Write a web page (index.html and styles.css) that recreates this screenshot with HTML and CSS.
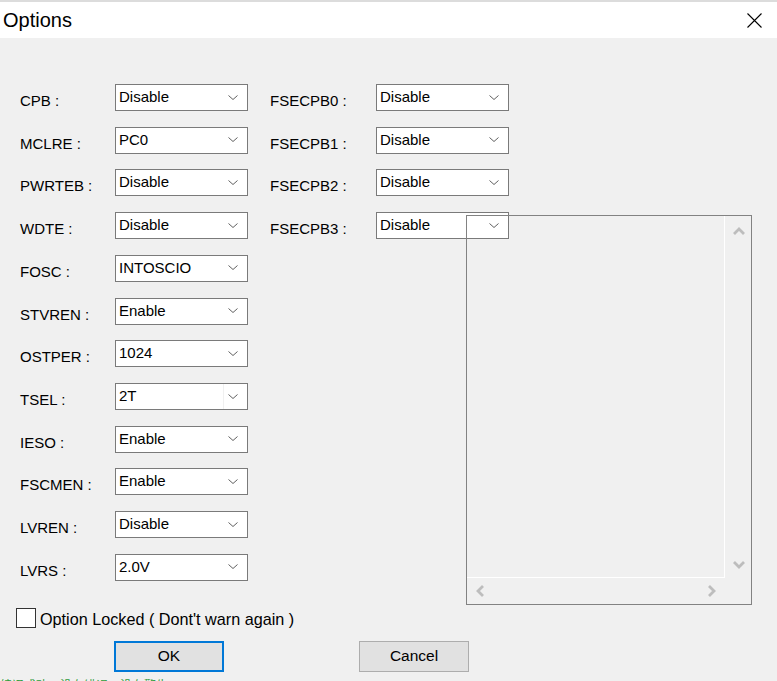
FILE: index.html
```html
<!DOCTYPE html>
<html>
<head>
<meta charset="utf-8">
<title>Options</title>
<link rel="stylesheet" href="styles.css">
</head>
<body>
<div class="window">
  <div class="titlebar">
    <span class="title">Options</span>
    <svg class="close" width="15" height="15" viewBox="0 0 15 15"><path d="M0.5 0.5 L14.5 14.5 M14.5 0.5 L0.5 14.5" stroke="#000" stroke-width="1.1" fill="none"/></svg>
  </div>
  <div class="content">
    <div class="fields">
      <div class="col col-left">
        <div class="row"><span class="label">CPB :</span><div class="combo"><span class="val">Disable</span><span class="arrow"><svg width="10" height="5" viewBox="0 0 10 5"><polyline points="0.5,0.5 5,4.5 9.5,0.5" fill="none" stroke="#606060" stroke-width="1"/></svg></span></div></div>
        <div class="row"><span class="label">MCLRE :</span><div class="combo"><span class="val">PC0</span><span class="arrow"><svg width="10" height="5" viewBox="0 0 10 5"><polyline points="0.5,0.5 5,4.5 9.5,0.5" fill="none" stroke="#606060" stroke-width="1"/></svg></span></div></div>
        <div class="row"><span class="label">PWRTEB :</span><div class="combo"><span class="val">Disable</span><span class="arrow"><svg width="10" height="5" viewBox="0 0 10 5"><polyline points="0.5,0.5 5,4.5 9.5,0.5" fill="none" stroke="#606060" stroke-width="1"/></svg></span></div></div>
        <div class="row"><span class="label">WDTE :</span><div class="combo"><span class="val">Disable</span><span class="arrow"><svg width="10" height="5" viewBox="0 0 10 5"><polyline points="0.5,0.5 5,4.5 9.5,0.5" fill="none" stroke="#606060" stroke-width="1"/></svg></span></div></div>
        <div class="row"><span class="label">FOSC :</span><div class="combo"><span class="val">INTOSCIO</span><span class="arrow"><svg width="10" height="5" viewBox="0 0 10 5"><polyline points="0.5,0.5 5,4.5 9.5,0.5" fill="none" stroke="#606060" stroke-width="1"/></svg></span></div></div>
        <div class="row"><span class="label">STVREN :</span><div class="combo"><span class="val">Enable</span><span class="arrow"><svg width="10" height="5" viewBox="0 0 10 5"><polyline points="0.5,0.5 5,4.5 9.5,0.5" fill="none" stroke="#606060" stroke-width="1"/></svg></span></div></div>
        <div class="row"><span class="label">OSTPER :</span><div class="combo"><span class="val">1024</span><span class="arrow"><svg width="10" height="5" viewBox="0 0 10 5"><polyline points="0.5,0.5 5,4.5 9.5,0.5" fill="none" stroke="#606060" stroke-width="1"/></svg></span></div></div>
        <div class="row"><span class="label">TSEL :</span><div class="combo hot"><span class="val">2T</span><span class="arrow"><svg width="10" height="5" viewBox="0 0 10 5"><polyline points="0.5,0.5 5,4.5 9.5,0.5" fill="none" stroke="#606060" stroke-width="1"/></svg></span></div></div>
        <div class="row"><span class="label">IESO :</span><div class="combo"><span class="val">Enable</span><span class="arrow"><svg width="10" height="5" viewBox="0 0 10 5"><polyline points="0.5,0.5 5,4.5 9.5,0.5" fill="none" stroke="#606060" stroke-width="1"/></svg></span></div></div>
        <div class="row"><span class="label">FSCMEN :</span><div class="combo"><span class="val">Enable</span><span class="arrow"><svg width="10" height="5" viewBox="0 0 10 5"><polyline points="0.5,0.5 5,4.5 9.5,0.5" fill="none" stroke="#606060" stroke-width="1"/></svg></span></div></div>
        <div class="row"><span class="label">LVREN :</span><div class="combo"><span class="val">Disable</span><span class="arrow"><svg width="10" height="5" viewBox="0 0 10 5"><polyline points="0.5,0.5 5,4.5 9.5,0.5" fill="none" stroke="#606060" stroke-width="1"/></svg></span></div></div>
        <div class="row"><span class="label">LVRS :</span><div class="combo"><span class="val">2.0V</span><span class="arrow"><svg width="10" height="5" viewBox="0 0 10 5"><polyline points="0.5,0.5 5,4.5 9.5,0.5" fill="none" stroke="#606060" stroke-width="1"/></svg></span></div></div>
      </div>
      <div class="col col-right">
        <div class="row"><span class="label">FSECPB0 :</span><div class="combo"><span class="val">Disable</span><span class="arrow"><svg width="10" height="5" viewBox="0 0 10 5"><polyline points="0.5,0.5 5,4.5 9.5,0.5" fill="none" stroke="#606060" stroke-width="1"/></svg></span></div></div>
        <div class="row"><span class="label">FSECPB1 :</span><div class="combo"><span class="val">Disable</span><span class="arrow"><svg width="10" height="5" viewBox="0 0 10 5"><polyline points="0.5,0.5 5,4.5 9.5,0.5" fill="none" stroke="#606060" stroke-width="1"/></svg></span></div></div>
        <div class="row"><span class="label">FSECPB2 :</span><div class="combo"><span class="val">Disable</span><span class="arrow"><svg width="10" height="5" viewBox="0 0 10 5"><polyline points="0.5,0.5 5,4.5 9.5,0.5" fill="none" stroke="#606060" stroke-width="1"/></svg></span></div></div>
        <div class="row"><span class="label">FSECPB3 :</span><div class="combo"><span class="val">Disable</span><span class="arrow"><svg width="10" height="5" viewBox="0 0 10 5"><polyline points="0.5,0.5 5,4.5 9.5,0.5" fill="none" stroke="#606060" stroke-width="1"/></svg></span></div></div>
      </div>
    </div>

    <div class="scrollbox">
      <div class="viewport"></div>
      <div class="vbar">
        <svg width="12" height="8" viewBox="0 0 12 8"><polyline points="1,7 6,2 11,7" fill="none" stroke="#bdbdbd" stroke-width="2.8"/></svg>
        <svg width="12" height="8" viewBox="0 0 12 8"><polyline points="1,1 6,6 11,1" fill="none" stroke="#bdbdbd" stroke-width="2.8"/></svg>
      </div>
      <div class="hbar">
        <svg width="8" height="12" viewBox="0 0 8 12"><polyline points="7,1 2,6 7,11" fill="none" stroke="#bdbdbd" stroke-width="2.8"/></svg>
        <svg width="8" height="12" viewBox="0 0 8 12"><polyline points="1,1 6,6 1,11" fill="none" stroke="#bdbdbd" stroke-width="2.8"/></svg>
      </div>
      <div class="corner"></div>
    </div>

    <div class="check">
      <span class="checkbox"></span>
      <span class="check-text">Option Locked ( Dont't warn again )</span>
    </div>

    <div class="buttons">
      <button class="btn btn-ok">OK</button>
      <button class="btn">Cancel</button>
    </div>

    <div class="status">编译成功，没有错误，没有警告</div>
  </div>
</div>
</body>
</html>
```

FILE: styles.css
```css
html, body {
  margin: 0;
  padding: 0;
}

body {
  width: 777px;
  height: 681px;
  overflow: hidden;
  background: #f0f0f0;
  font-family: "Liberation Sans", Arial, sans-serif;
  color: #000;
}

.window {
  display: flex;
  flex-direction: column;
}

.titlebar {
  height: 36px;
  border-top: 2px solid #dcdcdc;
  background: #fff;
  display: flex;
  align-items: center;
  justify-content: space-between;
  padding: 0 15px 0 3px;
}

.title {
  font-size: 20px;
  line-height: 36px;
}

.close {
  display: block;
}

.content {
  position: relative;
  padding-top: 46px;
  display: flex;
  flex-direction: column;
}

.fields {
  display: flex;
  padding-left: 20px;
  gap: 22px;
}

.col {
  display: flex;
  flex-direction: column;
  gap: 15.73px;
}

.row {
  display: flex;
  align-items: flex-start;
  height: 27px;
}

.col-left .label {
  width: 95px;
}

.col-right .label {
  width: 106px;
}

.label {
  font-size: 15px;
  line-height: 27px;
  padding-top: 3px;
  white-space: nowrap;
}

.combo {
  box-sizing: border-box;
  width: 133px;
  height: 27px;
  border: 1px solid #7a7a7a;
  background: #fff;
  display: flex;
  align-items: center;
  justify-content: space-between;
}

.val {
  font-size: 15px;
  line-height: 25px;
  padding-left: 3px;
  margin-top: -2px;
}

.arrow {
  width: 24px;
  height: 25px;
  display: flex;
  align-items: center;
  justify-content: flex-start;
  padding-left: 5px;
  box-sizing: border-box;
}

.arrow svg {
  display: block;
  margin-top: -1px;
}

.combo.hot .arrow {
  border-left: 1px solid #f0f0f0;
  padding-left: 4px;
}

.scrollbox {
  position: absolute;
  left: 466px;
  top: 177px;
  width: 286px;
  height: 390px;
  box-sizing: border-box;
  border: 1px solid #828282;
  display: grid;
  grid-template-columns: 258px 26px;
  grid-template-rows: 362px 26px;
}

.viewport {
  border-right: 1px solid #ffffff;
  border-bottom: 1px solid #ffffff;
}

.vbar {
  display: flex;
  flex-direction: column;
  justify-content: space-between;
  align-items: center;
  padding: 11px 0 9px 1px;
}

.hbar {
  display: flex;
  justify-content: space-between;
  align-items: center;
  padding: 0 9px 0 9px;
}

.vbar svg, .hbar svg {
  display: block;
}

.check {
  margin-top: 27px;
  padding-left: 16px;
  display: flex;
  align-items: flex-start;
  height: 20px;
}

.checkbox {
  box-sizing: border-box;
  width: 20px;
  height: 20px;
  border: 1px solid #333;
  background: #fff;
}

.check-text {
  margin-left: 4px;
  font-size: 16.2px;
  line-height: 20px;
  padding-top: 1px;
  white-space: nowrap;
}

.buttons {
  margin-top: 13px;
  padding-left: 114px;
  display: flex;
  gap: 135px;
}

.btn {
  box-sizing: border-box;
  width: 110px;
  height: 31px;
  margin: 0;
  padding: 0;
  background: #e1e1e1;
  border: 1px solid #adadad;
  font-family: "Liberation Sans", Arial, sans-serif;
  font-size: 15.5px;
  color: #000;
}

.btn-ok {
  border: 2px solid #0078d7;
}

.status {
  margin-top: 5px;
  font-family: "Noto Sans CJK SC", sans-serif;
  font-size: 12px;
  line-height: 16px;
  color: #2e9a3a;
  white-space: nowrap;
}
```
